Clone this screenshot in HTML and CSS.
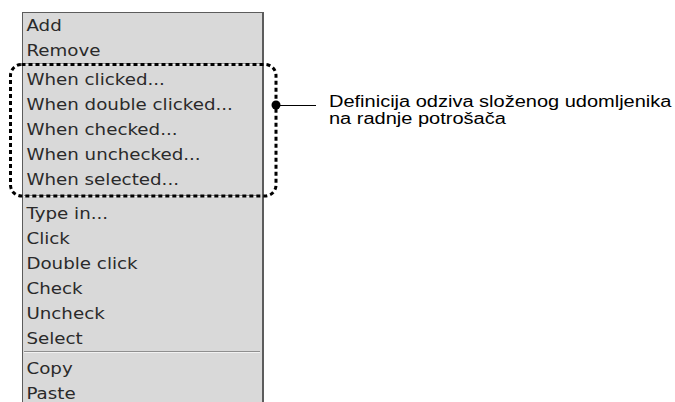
FILE: index.html
```html
<!DOCTYPE html>
<html lang="hr">
<head>
    <meta charset="UTF-8">
    <title>Kontekstni izbornik</title>
    <link rel="stylesheet" href="styles.css">
</head>
<body>
    <div class="page">
        <ul class="menu">
            <li class="item">Add</li>
            <li class="item">Remove</li>
            <li class="sep sep-small"></li>
            <li class="item">When clicked...</li>
            <li class="item">When double clicked...</li>
            <li class="item">When checked...</li>
            <li class="item">When unchecked...</li>
            <li class="item">When selected...</li>
            <li class="sep sep-large"></li>
            <li class="item">Type in...</li>
            <li class="item">Click</li>
            <li class="item">Double click</li>
            <li class="item">Check</li>
            <li class="item">Uncheck</li>
            <li class="item">Select</li>
            <li class="sep"></li>
            <li class="item">Copy</li>
            <li class="item">Paste</li>
        </ul>

        <p class="note">Definicija odziva složenog udomljenika<br>na radnje potrošača</p>

        <!-- callout drawn over the menu -->
        <svg class="callout" width="675" height="402" viewBox="0 0 675 402">
            <rect x="10.5" y="64.5" width="265.5" height="131.5" rx="11" ry="11"
                  fill="none" stroke="#000" stroke-width="3"
                  stroke-dasharray="4 3"/>
            <circle cx="276" cy="105" r="4.5" fill="#000"/>
            <line x1="276" y1="105.5" x2="316" y2="105.5" stroke="#000" stroke-width="1"/>
        </svg>
    </div>
</body>
</html>
```

FILE: styles.css
```css
/* Reset */
* {
    margin: 0;
    padding: 0;
    box-sizing: border-box;
}

html, body {
    height: 402px;
    overflow: hidden;
    background: #fff;
}

.page {
    position: relative;
    display: flex;
    align-items: flex-start;
    height: 402px;
}

/* Context menu */
.menu {
    list-style: none;
    margin: 12px 0 0 22px;
    width: 242px;
    background-color: #d9d9d9;
    border: 1px solid #5c5c5c;
    border-right-width: 2px;
    border-bottom: none;
    font-family: "DejaVu Sans", Verdana, sans-serif;
    font-size: 16px;
    color: #2a2a2a;
}

/* the screenshot is stretched sideways a little */
.item {
    height: 25px;
    line-height: 25px;
    padding-left: 3px;
    white-space: nowrap;
    transform: scaleX(1.14);
    transform-origin: left center;
}

.sep {
    height: 5px;
    margin: 0 2px 0 1px;
    border-top: 1px solid #8f8f8f;
    box-shadow: inset 0 1px 0 #f2f2f2;
}

.sep-small {
    height: 4px;
}

.sep-large {
    height: 6px;
    margin-top: 3px;
}

/* Description on the right */
.note {
    margin: 93px 0 0 65px;
    font-family: "Liberation Sans", Arial, sans-serif;
    font-size: 16px;
    line-height: 17px;
    color: #000;
    white-space: nowrap;
    transform: scaleX(1.25);
    transform-origin: left top;
}

.callout {
    position: absolute;
    left: 0;
    top: 0;
    pointer-events: none;
}
```
